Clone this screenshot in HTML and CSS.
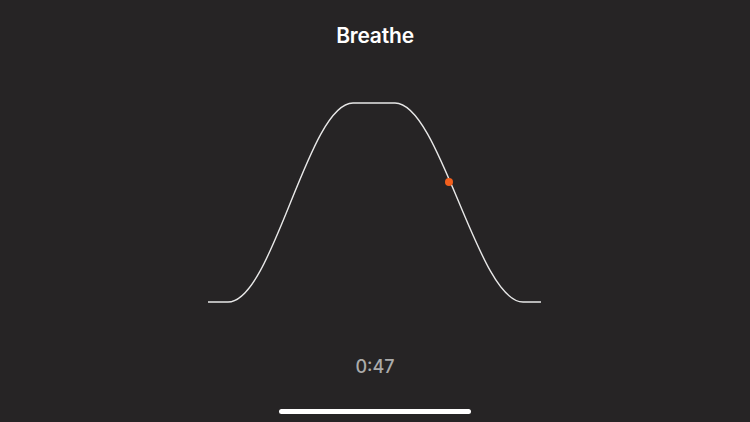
FILE: index.html
```html
<!DOCTYPE html>
<html lang="en">
<head>
    <meta charset="UTF-8">
    <meta name="viewport" content="width=device-width, initial-scale=1.0">
    <title>Breathe</title>
    <link rel="stylesheet" href="styles.css">
</head>
<body>
    <div class="screen">
        <h1 class="title">Breathe</h1>

        <!-- Breathing curve -->
        <svg class="curve" width="342" height="208" viewBox="204 98 342 208">
            <path d="M208 302 H228 C273 302 308 103 353 103 H395 C440 103 478 302 523 302 H541"
                  fill="none" stroke="#e8e8e8" stroke-width="1.4"/>
            <circle cx="449" cy="182" r="4" fill="#f2601e"/>
        </svg>

        <div class="timer">0:47</div>

        <div class="home-bar"></div>
    </div>
</body>
</html>
```

FILE: styles.css
```css
/* Page */
html, body {
    margin: 0;
    height: 100%;
    background: #262425;
    font-family: Inter, 'Open Sans', sans-serif;
    color: #fff;
}

.screen {
    height: 422px;
    display: flex;
    flex-direction: column;
    align-items: center;
}

.title {
    margin: 23px 0 0;
    font-size: 21px;
    line-height: 26px;
    font-weight: 600;
    letter-spacing: -0.2px;
}

.curve {
    display: block;
    margin-top: 49px;
}

.timer {
    margin-top: 50px;
    font-size: 18px;
    line-height: 22px;
    font-weight: 500;
    color: #ababab;
}

.home-bar {
    margin-top: 31px;
    width: 192px;
    height: 5px;
    border-radius: 3px;
    background: #fff;
}
```
